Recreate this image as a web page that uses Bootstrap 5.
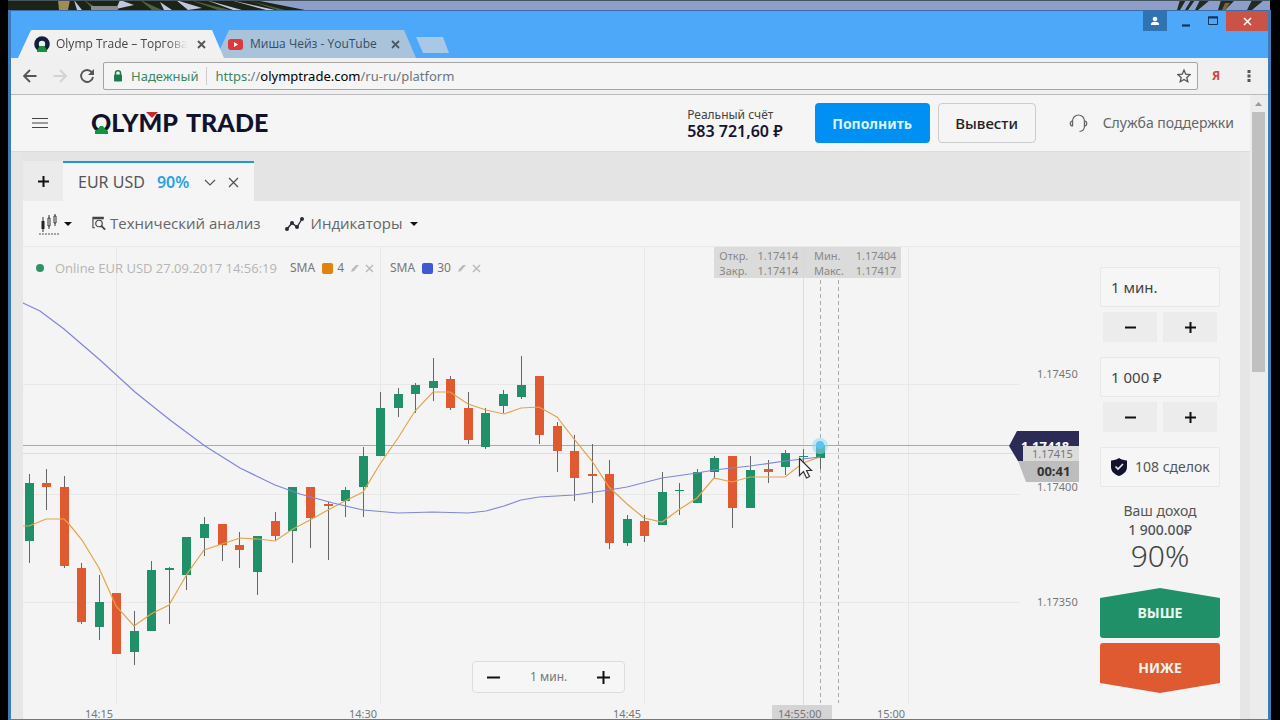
<!DOCTYPE html>
<html lang="ru">
<head>
<meta charset="utf-8">
<meta name="viewport" content="width=device-width, initial-scale=1">
<title>Olymp Trade – Торговая платформа</title>
<link rel="stylesheet" href="https://cdn.jsdelivr.net/npm/bootstrap@5.3.0/dist/css/bootstrap.min.css">
<style>
  body { font-family: "Noto Sans", "Open Sans", sans-serif; font-size: 14px; line-height: 20px; background: #000; color: #555; overflow: hidden; }
  button, input { font-family: inherit; }
  svg { display: block; flex-shrink: 0; }
  .plain-btn { border: 0; background: none; padding: 0; color: inherit; line-height: 1; }
  .desk-strip { height: 10px; }
  .browser-window { margin: 0 9px 0 8px; border: solid #3c7bb8; border-width: 0 3px; border-bottom: 1px solid #777; background: #f4f4f4; }
  .title-bar { background: #4da8fa; height: 48px; border-top: 1px solid #3a6ea5; font-family: "Open Sans", sans-serif; font-size: 12px; }
  .win-tab { height: 28px; background: #f1f1f1; color: #444; clip-path: polygon(13px 0, calc(100% - 12px) 0, 100% 100%, 0 100%); }
  .win-tab-front { width: 206px; margin-left: 7px; z-index: 1; padding: 0 18px 0 16px; gap: 6px; }
  .win-tab-back { width: 200px; margin-left: -8px; background: #a9c3db; padding: 0 16px 0 12px; color: #3b4c5e; gap: 7px; }
  .tab-label { overflow: hidden; white-space: nowrap; }
  .tab-fade { -webkit-mask-image: linear-gradient(90deg, #000 85%, transparent); mask-image: linear-gradient(90deg, #000 85%, transparent); }
  .new-tab { width: 33px; height: 16px; background: #a9c8e6; margin-bottom: 5px; clip-path: polygon(0 0, 27px 0, 100% 100%, 7px 100%); }
  .win-btns button { height: 20px; }
  .win-user { width: 24px; background: #2f73b3 !important; margin-right: 5px; }
  .win-mid { width: 27px; padding-left: 6px; }
  .win-close { width: 42px; background: #cb5346 !important; }
  .nav-row { height: 37px; background: #f0f0f0; border-bottom: 1px solid #bbb; padding: 0 12px; }
  .url-box { height: 28px; border: 1px solid #a5a5a5; border-radius: 2px; background: #f5f5f5; font-size: 13px; padding: 0 6px 0 9px; }
  .secure-text { color: #3b8762; }
  .ext-btn { font-size: 12px; width: 36px; color: #d4433f !important; font-weight: 700; }
  .menu-btn { padding: 0 5px 0 13px; }
  .site-head { height: 57px; background: #f5f5f5; border-bottom: 1px solid #dcdcdc; padding: 0 16px 0 21px; }
  .brand-link { margin-left: 44px; }
  .balance-name { font-size: 12px; line-height: 16px; color: #444; }
  .balance-sum { font-size: 16px; line-height: 16px; color: #14142e; font-weight: 600; }
  .btn-pay { width: 115px; height: 40px; background: #0090f3; color: #d9f3ff; font-size: 14px; font-weight: 700; padding: 0; border-radius: 4px; }
  .btn-take { width: 98px; height: 40px; border: 1px solid #ccc; color: #222; font-size: 15px; font-weight: 500; padding: 0; border-radius: 4px; }
  .support-link { color: #666; font-size: 14px; margin-left: 33px; gap: 15px; }
  .asset-bar { background: #e4e4e4; height: 49px; }
  .work-area { background: #e6e6e6; padding: 0 10px 0 12px; }
  .add-tab { width: 40px; height: 40px; background: #ebebeb !important; }
  .asset-tab { width: 191px; height: 40px; background: #f5f5f5; border-top: 2px solid #1b97da; font-size: 16px; line-height: 18px; padding: 0 15px; }
  .asset-pct { color: #27a2e6; font-weight: 600; }
  .tool-bar { height: 46px; background: #f5f5f5; border-bottom: 1px solid #e9e9e9; padding: 0 16px; font-family: "Open Sans", sans-serif; font-size: 15px; color: #666; }
  .indicator-btn { margin-left: 24px; }
  .indicator-btn .trend-icon { margin-right: 7px; }
  .trade-body { background: #f4f4f4; }
  .chart-wrap { min-width: 0; }
  .chart-wrap > svg { width: 100%; height: auto; overflow: visible; }
  .chart-legend { top: 11px; left: 13px; font-size: 12px; color: #b5b5b5; }
  .feed-name { width: 220px; margin-left: 11px; font-family: "Open Sans", sans-serif; font-size: 13px; white-space: nowrap; }
  .legend-item { margin-left: 15px; gap: 7px; }
  .legend-name { font-size: 12px; color: #777; }
  .legend-num { font-size: 12px; color: #777; margin-left: -3px; }
  .swatch { width: 11px; height: 11px; border-radius: 2px; }
  .swatch-a { background: #e2820c; }
  .swatch-b { background: #4159d0; }
  .live-dot { width: 8px; height: 8px; border-radius: 50%; background: #2a9468; }
  .ohlc-box { left: 65.1%; top: 0; width: 187px; height: 31px; background: rgba(214,214,214,.85); color: #888; font-size: 11px; line-height: 15px; padding: 1px 5px; }
  .ohlc-box table { width: 100%; }
  .ohlc-box td { padding: 0; }
  .ohlc-box td:nth-child(2) { padding-left: 5px; }
  .ohlc-box td:nth-child(3) { padding-left: 9px; }
  .zoom-box { left: 42.3%; bottom: 26px; width: 153px; height: 32px; border: 1px solid #ddd; border-radius: 4px; background: #f6f6f6; font-size: 12px; color: #777; padding: 0 14px; }
  .order-panel { width: 155px; padding: 20px 20px 0 15px; }
  .field-box { width: 100%; height: 40px; border: 1px solid #e8e8e8; border-radius: 2px; background: #f6f6f6; padding: 0 10px; font-size: 15px; color: #444; }
  .deal-box { font-size: 14px; color: #555; }
  .step-row { gap: 6px; padding: 5px 3px 0; }
  .step-btn { height: 30px; background: #ececec !important; }
  .field-group { margin-bottom: 15px; }
  .income-block { padding-top: 14px; margin-bottom: 15px; }
  .income-sum { line-height: 18px; font-weight: 500; }
  .income-pct { font-size: 30px; line-height: 34px; color: #444; font-weight: 300; }
  .bet-btn { height: 50px; color: #e9f7ee; font-weight: 700; font-size: 14px; }
  .bet-up { clip-path: polygon(0 10px, 50% 0, 100% 10px, 100% 100%, 0 100%); background: #1f9067 !important; border-radius: 0 0 3px 3px; margin-bottom: 5px; }
  .bet-down { clip-path: polygon(0 0, 100% 0, 100% 40px, 50% 100%, 0 40px); background: #e05a31 !important; border-radius: 3px 3px 0 0; }
  .page-scroll { width: 18px; background: #ececec; padding: 7px 3px 0 2px; }
  .scroll-thumb { height: 260px; background: #c0c0c0; margin-top: 5px; }
  .axis-text { font-size: 11px; fill: #777; }
</style>
</head>
<body>
<div class="desk-strip">
  <svg width="100%" height="10" viewBox="0 0 1280 10" preserveAspectRatio="none" aria-hidden="true">
    <rect width="1280" height="10" fill="#000"/>
    <path d="M8 0H1270V10H8z" fill="#8f9dc9"/>
    <path d="M8 0H255L305 10H8z" fill="#1c2416"/>
    <path d="M58 0h12l-2 10h-9z" fill="#a18b57"/>
    <path d="M74 0l8 10h-5zM120 0l14 5-18 4zM160 2l12 8h-8zM176 0l26 8-14 2zM206 0l36 10h-9zM230 0l45 10h-9z" fill="#c3c5da"/>
    <path d="M84 0l16 10h-6zM140 0l22 10h-10zM190 0l40 10h-12zM250 1l35 9h-8z" fill="#53613a"/>
    <path d="M91 6h27v4h-27z" fill="#8b8b8b"/>
    <path d="M1180 0h6l-6 10h-3zM1191 0h4l-7 10h-3zM1200 0h10l-12 10h-3zM1221 0h14l-10 10h-7zM1252 0h12l-12 10h-5z" fill="#222a22"/>
    <path d="M1225 3h5l-5 7h-3z" fill="#82643a"/>
    <path d="M8 0H1270V1H8z" fill="#445463"/>
  </svg>
</div>

<div class="browser-window">
  <div class="title-bar d-flex justify-content-between">
    <div class="d-flex align-items-end">
      <div class="win-tab win-tab-front d-flex align-items-center position-relative">
        <svg width="16" height="16" viewBox="0 0 16 16"><circle cx="8" cy="8" r="5.5" fill="#e8f0ee" stroke="#14203a" stroke-width="4.6"/><path d="M3 16v-2l3-4h4l3 4v2z" fill="#14923e"/></svg>
        <span class="tab-label tab-fade flex-fill me-1">Olymp Trade – Торговая</span>
        <button class="plain-btn" aria-label="Закрыть вкладку"><svg width="9" height="9" viewBox="0 0 9 9"><path d="M1 1l7 7M8 1l-7 7" stroke="#555" stroke-width="1.8"/></svg></button>
      </div>
      <div class="win-tab win-tab-back d-flex align-items-center">
        <svg width="15" height="11" viewBox="0 0 15 11"><rect width="15" height="11" rx="3" fill="#e0373c"/><path d="M6 3l4 2.500-4 2.500z" fill="#fff"/></svg>
        <span class="tab-label flex-fill">Миша Чейз - YouTube</span>
        <button class="plain-btn" aria-label="Закрыть вкладку"><svg width="9" height="9" viewBox="0 0 9 9"><path d="M1 1l7 7M8 1l-7 7" stroke="#4a5a6a" stroke-width="1.8"/></svg></button>
      </div>
      <button class="plain-btn new-tab" aria-label="Новая вкладка"></button>
    </div>
    <div class="win-btns d-flex align-items-start">
      <button class="plain-btn win-user d-flex justify-content-center align-items-center" aria-label="Профиль"><svg width="10" height="10" viewBox="0 0 10 10"><circle cx="5" cy="3" r="2.300" fill="#fff"/><path d="M1 9V8c0-3 8-3 8 0v1z" fill="#fff"/></svg></button>
      <button class="plain-btn win-mid" aria-label="Свернуть"><svg width="18" height="12" viewBox="0 0 18 12"><path d="M4 10.500h8" stroke="#173353" stroke-width="2.200"/></svg></button>
      <button class="plain-btn win-mid" aria-label="Развернуть"><svg width="18" height="12" viewBox="0 0 18 12"><path d="M3.500 2h9v7.500h-9z" fill="none" stroke="#173353"/><path d="M3 2.500h10" stroke="#173353" stroke-width="2"/></svg></button>
      <button class="plain-btn win-close d-flex justify-content-center align-items-center" aria-label="Закрыть"><svg width="9" height="9" viewBox="0 0 9 9"><path d="M1 1l7 7M8 1l-7 7" stroke="#fff" stroke-width="1.500"/></svg></button>
    </div>
  </div>

  <div class="nav-row d-flex align-items-center">
    <button class="plain-btn" aria-label="Назад"><svg width="14" height="14" viewBox="0 0 14 14"><path d="M13.500 7H1.500M7 1L1 7l6 6" fill="none" stroke="#555" stroke-width="1.800"/></svg></button>
    <button class="plain-btn ms-3" aria-label="Вперёд"><svg width="14" height="14" viewBox="0 0 14 14"><path d="M.5 7h12M7 1l6 6-6 6" fill="none" stroke="#d2d2d2" stroke-width="1.800"/></svg></button>
    <button class="plain-btn ms-2 ps-1" aria-label="Обновить"><svg width="16" height="16" viewBox="0 0 16 16"><path d="M12.800 4.200A6 6 0 1 0 14 9" fill="none" stroke="#555" stroke-width="1.900"/><path d="M15 1v6H9z" fill="#555"/></svg></button>
    <div class="url-box d-flex align-items-center flex-fill ms-2">
      <svg width="10" height="12" viewBox="0 0 10 12"><path d="M2.500 5V3a2.500 2.200 0 0 1 5 0v2" fill="none" stroke="#1e7a4c" stroke-width="1.500"/><rect x="1" y="4.500" width="8" height="7" rx="1" fill="#1e7a4c"/></svg>
      <span class="secure-text ms-2">Надежный</span>
      <span class="vr ms-2 me-2 my-1"></span>
      <a href="#" class="text-decoration-none text-secondary flex-fill"><span class="secure-text">https</span>://<span class="text-black">olymptrade.com</span>/ru-ru/platform</a>
      <svg width="14" height="14" viewBox="0 0 14 14"><path d="M7 1l1.700 4.100 4.500.4-3.400 2.900 1 4.300L7 10.400l-3.800 2.300 1-4.300L.8 5.500l4.500-.4z" fill="none" stroke="#555" stroke-width="1.300"/></svg>
    </div>
    <button class="plain-btn ext-btn">Я</button>
    <button class="plain-btn menu-btn" aria-label="Меню"><svg width="4" height="14" viewBox="0 0 4 14"><path d="M.5 1h3v3h-3zM.5 5.500h3v3h-3zM.5 10h3v3h-3z" fill="#555"/></svg></button>
  </div>

  <div class="d-flex">
    <div class="flex-fill">
      <header class="site-head d-flex align-items-center">
        <button class="plain-btn" aria-label="Меню"><svg width="16" height="10" viewBox="0 0 16 10"><path d="M0 .5h16M0 5h16M0 9.500h16" stroke="#444"/></svg></button>
        <a href="#" class="brand-link text-decoration-none" aria-label="Olymp Trade">
          <svg width="185" height="30" viewBox="0 0 185 30" overflow="visible"><g font-family="Lato" font-weight="900" font-size="25" fill="#10132e"><text x="-1" y="24">OLYMP</text><text x="94" y="24">TRADE</text></g><path d="M3 26v-3l3-2 2-3h3l2 3 3 2v3z" fill="#14923e"/><path d="M54 4h12l-6 6z" fill="#c22a2e"/></svg>
        </a>
        <div class="ms-auto me-4 pe-2">
          <div class="balance-name">Реальный счёт</div>
          <div class="balance-sum">583 721,60 ₽</div>
        </div>
        <button class="btn btn-pay me-2">Пополнить</button>
        <button class="btn btn-take">Вывести</button>
        <a href="#" class="support-link text-decoration-none d-flex align-items-center">
          <svg width="19" height="20" viewBox="0 0 18 20"><path d="M3 13V8a6 6 0 0 1 12 0v5c0 3-1 5-5 5.500" fill="none" stroke="#666" stroke-width="1.200"/><path d="M3 8C0 8 0 13 3 13zM15 8c3 0 3 5 0 5z" fill="none" stroke="#666" stroke-width="1.200"/></svg>
          Служба поддержки
        </a>
      </header>

      <main class="work-area">
        <div class="asset-bar d-flex align-items-end">
          <button class="plain-btn add-tab d-flex align-items-center justify-content-center" aria-label="Добавить актив"><svg width="11" height="11" viewBox="0 0 11 11"><path d="M0 5.500h11M5.500 0v11" stroke="#111" stroke-width="2"/></svg></button>
          <div class="asset-tab d-flex align-items-center">
            <span>EUR USD</span><span class="asset-pct ms-2 ps-1">90%</span>
            <button class="plain-btn ms-auto" aria-label="Выбрать"><svg width="12" height="7" viewBox="0 0 12 7"><path d="M1 1l5 5 5-5" fill="none" stroke="#555" stroke-width="1.200"/></svg></button>
            <button class="plain-btn ms-2 ps-1" aria-label="Закрыть"><svg width="11" height="11" viewBox="0 0 11 11"><path d="M1 1l9 9M10 1l-9 9" stroke="#555" stroke-width="1.300"/></svg></button>
          </div>
        </div>

        <div class="tool-bar d-flex align-items-center">
          <button class="plain-btn d-flex align-items-center" aria-label="Вид графика">
            <svg width="21" height="22" viewBox="0 0 21 22"><path d="M4 4v15M10 2v14M16 1v12" stroke="#333"/><path d="M2.500 8h3v8h-3z" fill="#222"/><path d="M9 5h2v8h-2zM15 3h2v7h-2z" fill="#f5f5f5" stroke="#333"/><path d="M0 21h21" stroke="#555" stroke-dasharray="2 1"/></svg>
            <svg class="ms-1" width="8" height="4" viewBox="0 0 8 4"><path d="M0 0h8L4 4z" fill="#111"/></svg>
          </button>
          <button class="plain-btn d-flex align-items-center ms-3 ps-1">
            <svg class="me-1" width="14" height="15" viewBox="0 0 15 15"><path d="M3 12H1V1h11v2" fill="none" stroke="#444" stroke-width="1.200"/><path d="M1 2h11" stroke="#444" stroke-width="2"/><circle cx="7.500" cy="7.500" r="3.500" fill="none" stroke="#444" stroke-width="1.300"/><path d="M10 10l4 4" stroke="#444" stroke-width="2"/></svg>
            Технический анализ
          </button>
          <button class="plain-btn indicator-btn d-flex align-items-center">
            <svg class="trend-icon" width="19" height="14" viewBox="0 0 19 14"><path d="M2 12l5-6 5 4 5-8" fill="none" stroke="#2a2a3a" stroke-width="1.400"/><g fill="#2a2a3a"><circle cx="2" cy="12" r="2"/><circle cx="7" cy="6" r="2"/><circle cx="12" cy="10" r="2"/><circle cx="17" cy="2" r="2"/></g></svg>
            Индикаторы
            <svg class="ms-2" width="8" height="4" viewBox="0 0 8 4"><path d="M0 0h8L4 4z" fill="#111"/></svg>
          </button>
        </div>

        <div class="trade-body d-flex">
          <div class="chart-wrap flex-fill position-relative">
            <svg viewBox="23 247 1062 472" role="img" aria-label="График EUR USD">
              <path d="M23 384.500H1020M23 494.500H1020M23 602.500H1020M116.500 247V703M380.500 247V703M644.500 247V703M908.500 247V703" stroke="#e8e8e8"/>
              <path d="M803.500 247V706" stroke="#ddd"/>
              <path d="M23 453.500H1020" stroke="#dedede"/>
              <path d="M23 445.500H1012" stroke="#aaa"/>
              <path d="M820.500 280V703M838.500 280V703" stroke="#aaa" stroke-dasharray="4 3"/>
              <g id="candles"></g>
              <polyline fill="none" stroke="#e0a54c" stroke-width="1.200" points="23,526 29,526 46,519 64,519 69,524 82,540 99,568 116,606 134,626 151,614 169,605 187,574 204,550 222,544 240,538 258,539 275,541 293,529 310,520 328,510 345,501 363,492 380,464 398,438 415,411 433,392 450,392 468,404 486,410 504,414 521,408 539,407 557,417 574,439 592,461 609,487 627,504 644,518 662,522 680,509 697,498 714,478 732,482 750,477 785,477 803,463 820,457"/>
              <polyline fill="none" stroke="#7f86d8" stroke-width="1.200" points="23,303 40,311 64,329 100,360 135,392 170,420 205,446 240,468 275,485 300,494 333,503 363,510 398,513 433,512 468,513 486,511 504,506 521,500 539,497 574,495 609,490 627,487 662,478 697,473 714,470 750,466 785,461 803,459 820,457"/>
              <circle cx="820" cy="446" r="8" fill="#8fd8f5" opacity=".55"/>
              <circle cx="820" cy="445" r="4" fill="#5cc3ee"/>
              <path d="M799.500 458.500v17l4-4 3 6.500 3-1.500-3-6h5z" fill="#fff" stroke="#333" stroke-width="1.200"/>
              <g class="axis-text">
                <text x="1037" y="378">1.17450</text><text x="1037" y="491">1.17400</text><text x="1037" y="606">1.17350</text>
                <text x="85" y="718">14:15</text><text x="349" y="718">14:30</text><text x="613" y="718">14:45</text><text x="877" y="718">15:00</text>
              </g>
              <path d="M772 705h60v14h-60z" fill="#d4d4d4"/>
              <text class="axis-text" x="778" y="718">14:55:00</text>
              <path d="M1009 446l8-15h62v30h-61z" fill="#2b2b55"/>
              <text x="1021" y="451" font-size="13" font-weight="700" fill="#fff">1.17418</text>
              <path d="M1023 446h56v15h-56z" fill="#dcdcdc"/>
              <path d="M1018 461h61v21h-53z" fill="#bdbdbd"/>
              <text class="axis-text" x="1032" y="458">1.17415</text>
              <text x="1037" y="476" font-size="13" font-weight="700" fill="#333">00:41</text>
            </svg>

            <div class="chart-legend position-absolute d-flex align-items-center">
              <span class="live-dot"></span><span class="feed-name">Online EUR USD 27.09.2017 14:56:19</span>
              <span class="legend-item d-flex align-items-center">
                <span class="legend-name">SMA</span><span class="swatch swatch-a"></span><span class="legend-num">4</span>
                <svg width="24" height="9" viewBox="0 0 24 9"><path d="M0 8l1-3 4-4h3L3 7z" fill="#bbb"/><path d="M15 1l7 7M22 1l-7 7" stroke="#bbb" stroke-width="1.500"/></svg>
              </span>
              <span class="legend-item d-flex align-items-center">
                <span class="legend-name">SMA</span><span class="swatch swatch-b"></span><span class="legend-num">30</span>
                <svg width="24" height="9" viewBox="0 0 24 9"><path d="M0 8l1-3 4-4h3L3 7z" fill="#bbb"/><path d="M15 1l7 7M22 1l-7 7" stroke="#bbb" stroke-width="1.500"/></svg>
              </span>
            </div>

            <div class="ohlc-box position-absolute">
              <table>
                <tr><td>Откр.</td><td>1.17414</td><td>Мин.</td><td class="text-end">1.17404</td></tr>
                <tr><td>Закр.</td><td>1.17414</td><td>Макс.</td><td class="text-end">1.17417</td></tr>
              </table>
            </div>

            <div class="zoom-box position-absolute d-flex align-items-center justify-content-between">
              <button class="plain-btn" aria-label="Меньше"><svg width="13" height="13" viewBox="0 0 13 13"><path d="M0 6.500h13" stroke="#111" stroke-width="2"/></svg></button>
              <span>1 мин.</span>
              <button class="plain-btn" aria-label="Больше"><svg width="13" height="13" viewBox="0 0 13 13"><path d="M0 6.500h13M6.500 0v13" stroke="#111" stroke-width="2"/></svg></button>
            </div>
          </div>

          <aside class="order-panel flex-shrink-0">
            <div class="field-group">
              <input class="field-box d-block" type="text" value="1 мин." aria-label="Время">
              <div class="step-row d-flex">
                <button class="plain-btn step-btn flex-fill d-flex align-items-center justify-content-center" aria-label="Меньше времени"><svg width="11" height="11" viewBox="0 0 11 11"><path d="M0 5.500h11" stroke="#111" stroke-width="2"/></svg></button>
                <button class="plain-btn step-btn flex-fill d-flex align-items-center justify-content-center" aria-label="Больше времени"><svg width="11" height="11" viewBox="0 0 11 11"><path d="M0 5.500h11M5.500 0v11" stroke="#111" stroke-width="2"/></svg></button>
              </div>
            </div>
            <div class="field-group">
              <input class="field-box d-block" type="text" value="1 000 ₽" aria-label="Сумма">
              <div class="step-row d-flex">
                <button class="plain-btn step-btn flex-fill d-flex align-items-center justify-content-center" aria-label="Уменьшить сумму"><svg width="11" height="11" viewBox="0 0 11 11"><path d="M0 5.500h11" stroke="#111" stroke-width="2"/></svg></button>
                <button class="plain-btn step-btn flex-fill d-flex align-items-center justify-content-center" aria-label="Увеличить сумму"><svg width="11" height="11" viewBox="0 0 11 11"><path d="M0 5.500h11M5.500 0v11" stroke="#111" stroke-width="2"/></svg></button>
              </div>
            </div>
            <div class="field-box deal-box d-flex align-items-center text-nowrap">
              <svg class="me-2" width="16" height="18" viewBox="0 0 16 18"><path d="M8 0c3 2 5 2 8 2.500V9c0 5-4 7.500-8 9-4-1.500-8-4-8-9V2.500C3 2 5 2 8 0z" fill="#12122e"/><path d="M4.500 8.500l2.500 2.500 5-5" fill="none" stroke="#e8e8f0" stroke-width="1.600"/></svg>
              108 сделок
            </div>
            <div class="income-block text-center">
              <div>Ваш доход</div>
              <div class="income-sum">1 900.00₽</div>
              <div class="income-pct">90%</div>
            </div>
            <button class="plain-btn bet-btn bet-up d-block w-100">ВЫШЕ</button>
            <button class="plain-btn bet-btn bet-down d-block w-100">НИЖЕ</button>
          </aside>
        </div>
      </main>
    </div>
    <div class="page-scroll flex-shrink-0">
      <svg class="mx-auto" width="7" height="5" viewBox="0 0 7 5"><path d="M0 4h7L3.500 0z" fill="#999"/></svg>
      <div class="scroll-thumb"></div>
    </div>
  </div>
</div>

<script src="https://cdn.jsdelivr.net/npm/bootstrap@5.3.0/dist/js/bootstrap.bundle.min.js"></script>
<script>
  // centre x, wick top, body top, body bottom, wick bottom, up (1) or down (0)
  const candles = [
    [29.5,474,483,541,563,1],[46.5,469,483,487,510,0],[64.5,476,487,566,568,0],[81.5,563,568,622,624,0],
    [99.5,575,602,627,640,1],[116.5,593,593,654,654,0],[134.5,611,631,652,665,1],[151.5,561,570,631,631,1],
    [169.5,567,568,570,624,1],[186.5,537,537,575,590,1],[204.5,517,524,538,556,1],[222.5,524,524,545,561,0],
    [239.5,532,545,550,568,0],[257.5,536,536,572,595,1],[275.5,512,521,536,541,0],[292.5,487,487,531,563,0],
    [310.5,487,487,518,548,0],[328.5,502,504,506,560,0],[345.5,487,490,501,517,1],[363.5,447,456,487,517,1],
    [380.5,392,408,456,456,1],[398.5,388,394,408,417,1],[415.5,383,385,394,413,1],[433.5,358,381,388,401,1],
    [450.5,376,379,408,410,0],[468.5,392,408,440,444,0],[485.5,408,413,447,449,1],[503.5,390,394,406,413,1],
    [521.5,356,385,397,399,1],[539.5,376,376,435,444,0],[557.5,422,426,451,472,0],[574.5,435,451,478,501,0],
    [592.5,444,474,476,503,0],[609.5,460,474,543,549,0],[627.5,515,519,543,546,1],[644.5,515,521,536,542,0],
    [662.5,472,492,525,525,1],[679.5,483,490,491,515,1],[697.5,469,472,503,503,1],[714.5,456,458,472,478,1],
    [732.5,456,456,508,528,0],[750.5,456,470,508,508,1],[768.5,460,469,472,483,0],[785.5,450,453,467,475,1],
    [803.5,449,456,457,465,1],[820.5,445,445,458,469,1]
  ];
  candles[15][5] = 1;
  document.getElementById('candles').innerHTML = candles.map(([x, h, t, b, l, up]) =>
    `<path d="M${x} ${h}V${l}" stroke="#666"/><rect x="${x - 4.5}" y="${t}" width="9" height="${b - t}" fill="${up ? '#1f9067' : '#e05a31'}"/>`
  ).join('');
</script>
</body>
</html>
